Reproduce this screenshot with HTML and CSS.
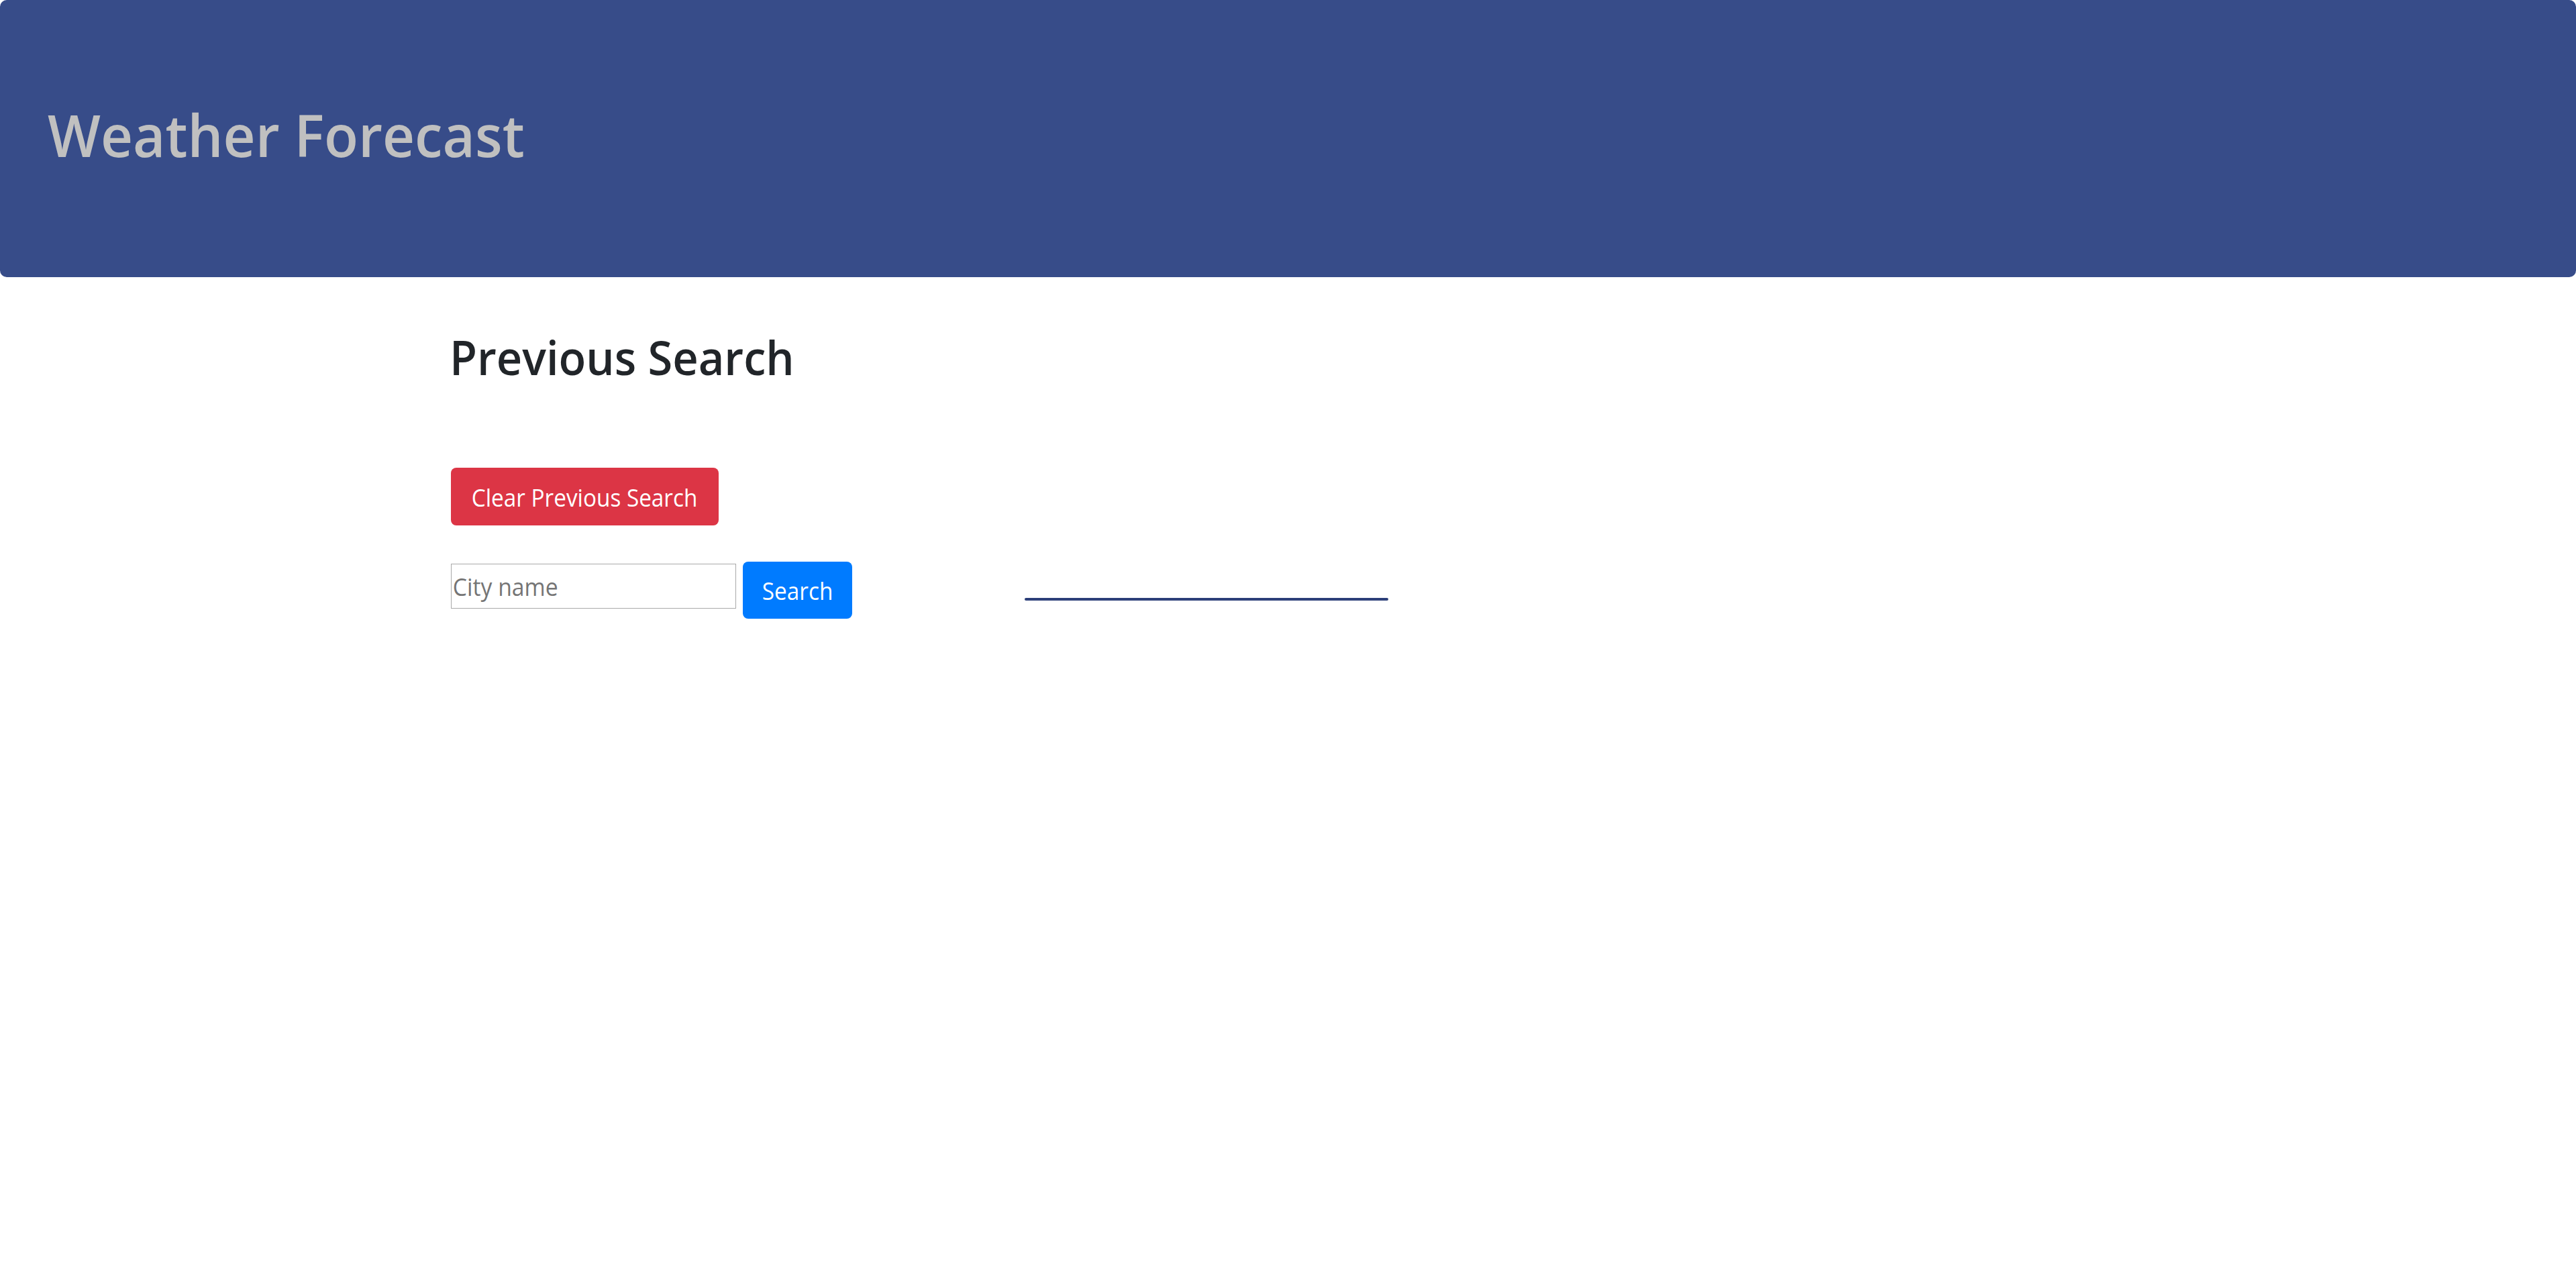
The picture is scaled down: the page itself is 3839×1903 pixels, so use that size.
FILE: index.html
```html
<!DOCTYPE html>
<html lang="en">
<head>
<meta charset="utf-8">
<title>Weather Forecast</title>
<link rel="stylesheet" href="styles.css">
</head>
<body>
<header class="masthead">
  <h1 class="masthead-title"><span class="squeeze">Weather Forecast</span></h1>
</header>
<main class="content">
  <h2 class="section-title"><span class="squeeze">Previous Search</span></h2>
  <button class="btn btn-danger" type="button"><span class="squeeze">Clear Previous Search</span></button>
  <div class="search-row">
    <div class="field"><input class="field-input" type="text" placeholder="City name"></div>
    <button class="btn btn-primary" type="button"><span class="squeeze">Search</span></button>
    <div class="divider-line"></div>
  </div>
</main>
</body>
</html>
```
FILE: styles.css
```css
body {
  margin: 0;
  background: #ffffff;
  font-family: "Open Sans", "Noto Sans", sans-serif;
}

.squeeze {
  display: inline-block;
  white-space: nowrap;
  transform-origin: left center;
}

.masthead {
  box-sizing: border-box;
  height: 413px;
  padding: 157px 0 0 71px;
  background: #374c89;
  border-radius: 10px;
}

.masthead-title {
  margin: 0;
  font-size: 87px;
  line-height: 87px;
  font-weight: 600;
  color: #c0c0c0;
  white-space: nowrap;
}

.masthead-title .squeeze {
  transform: scaleX(0.96);
}

.content {
  padding-left: 672px;
}

.section-title {
  margin: 83px 0 0 -2px;
  font-size: 71px;
  line-height: 71px;
  font-weight: 600;
  color: #212529;
}

.section-title .squeeze {
  transform: scaleX(0.94);
}

.btn {
  display: flex;
  align-items: center;
  justify-content: center;
  box-sizing: border-box;
  padding: 0;
  border: 0;
  border-radius: 8px;
  color: #ffffff;
  font-family: inherit;
  font-size: 37px;
  line-height: 1;
  overflow: visible;
}

.btn .squeeze {
  transform-origin: center center;
  transform: scaleX(0.9);
}

.btn-danger {
  width: 399px;
  height: 86px;
  margin-top: 130px;
  background: #dc3545;
}

.search-row {
  display: flex;
  align-items: flex-start;
  margin-top: 54px;
}

.field {
  box-sizing: border-box;
  width: 425px;
  height: 67px;
  margin-top: 3px;
  border: 1px solid #a9a9a9;
  overflow: hidden;
}

.field-input {
  box-sizing: border-box;
  width: 467px;
  height: 65px;
  margin: 0;
  padding: 0 0 0 2px;
  border: 0;
  background: transparent;
  outline: none;
  font-family: inherit;
  font-size: 37px;
  color: #495057;
  transform: scaleX(0.91);
  transform-origin: left center;
}

.field-input::placeholder {
  color: #757575;
}

.btn-primary {
  width: 163px;
  height: 85px;
  margin-left: 10px;
  background: #007bff;
}

.divider-line {
  width: 542px;
  height: 4px;
  margin: 54px 0 0 257px;
  background: #2c3f79;
  border-radius: 2px;
}
```
